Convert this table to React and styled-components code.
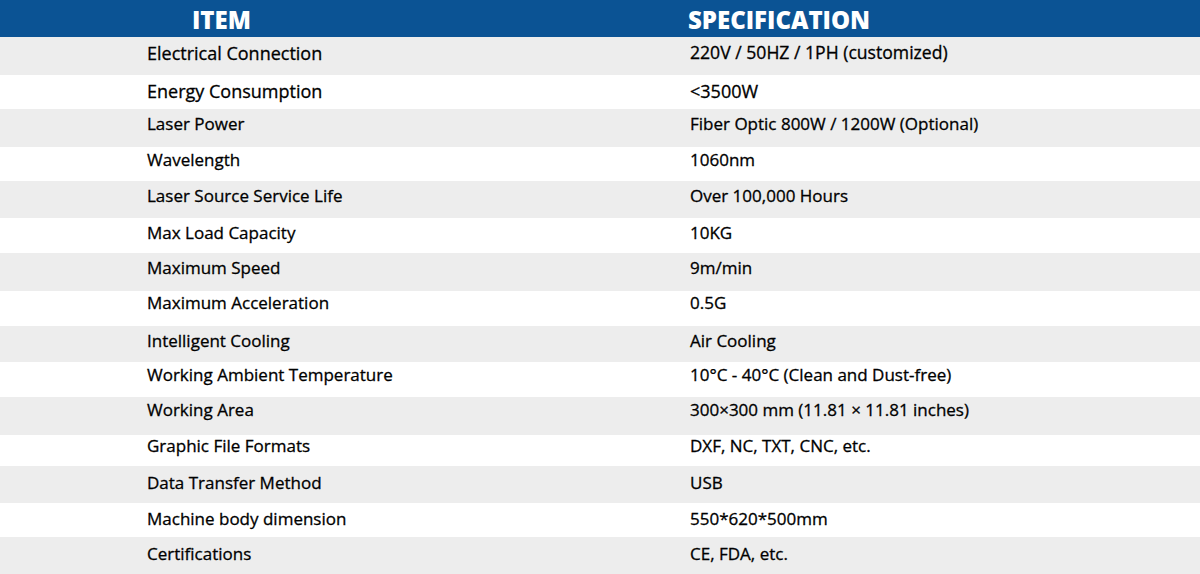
import React from "react";
import styled, { createGlobalStyle } from "styled-components";

const Global = createGlobalStyle`
  html, body { margin: 0; padding: 0; background: #fff; }
  body { font-family: "Open Sans", "Noto Sans", sans-serif; }
`;

const Table = styled.div`
  width: 1200px;
  display: flex;
  flex-direction: column;
`;

const Header = styled.div`
  height: 37px;
  box-sizing: border-box;
  padding-top: 7.5px;
  background: #0b5394;
  display: grid;
  grid-template-columns: 688px 1fr;
  align-items: start;
  color: #fff;
  font-weight: 800;
  font-size: 24px;
  line-height: 1;
`;

const HeadCell = styled.div`
  padding-left: ${(p) => p.$pad}px;
`;

const Row = styled.div`
  height: ${(p) => p.$h}px;
  box-sizing: border-box;
  padding-top: ${(p) => p.$pt}px;
  background: ${(p) => (p.$alt ? "#ededed" : "#fff")};
  display: grid;
  grid-template-columns: 690px 1fr;
  align-items: start;
  color: #000;
  font-weight: 400;
  -webkit-text-stroke: 0.3px #000;
  font-size: ${(p) => (p.$big ? 18 : 17)}px;
  line-height: 1;
`;

const Cell = styled.div`
  padding-left: ${(p) => p.$pad || 0}px;
  white-space: nowrap;
  font-size: ${(p) => (p.$size ? `${p.$size}px` : "inherit")};
`;

const rows = [
  ["Electrical Connection", "220V / 50HZ / 1PH (customized)", 38, 7, 17.6],
  ["Energy Consumption", "<3500W", 34, 7],
  ["Laser Power", "Fiber Optic 800W / 1200W (Optional)", 38, 6],
  ["Wavelength", "1060nm", 34, 4],
  ["Laser Source Service Life", "Over 100,000 Hours", 37, 6],
  ["Max Load Capacity", "10KG", 35, 6],
  ["Maximum Speed", "9m/min", 38, 6],
  ["Maximum Acceleration", "0.5G", 35, 3],
  ["Intelligent Cooling", "Air Cooling", 36, 6],
  ["Working Ambient Temperature", "10°C - 40°C (Clean and Dust-free)", 35, 4],
  ["Working Area", "300×300 mm (11.81 × 11.81 inches)", 38, 4],
  ["Graphic File Formats", "DXF, NC, TXT, CNC, etc.", 31, 2],
  ["Data Transfer Method", "USB", 37, 8],
  ["Machine body dimension", "550*620*500mm", 34, 7],
  ["Certifications", "CE, FDA, etc.", 37, 8],
];

export default function App() {
  return (
    <>
      <Global />
      <Table>
        <Header>
          <HeadCell $pad={192}>ITEM</HeadCell>
          <HeadCell $pad={0}>SPECIFICATION</HeadCell>
        </Header>
        {rows.map(([a, b, h, pt, specSize], i) => (
          <Row key={a} $alt={i % 2 === 0} $h={h} $pt={pt} $big={i < 2}>
            <Cell $pad={147}>{a}</Cell>
            <Cell $size={specSize}>{b}</Cell>
          </Row>
        ))}
      </Table>
    </>
  );
}
